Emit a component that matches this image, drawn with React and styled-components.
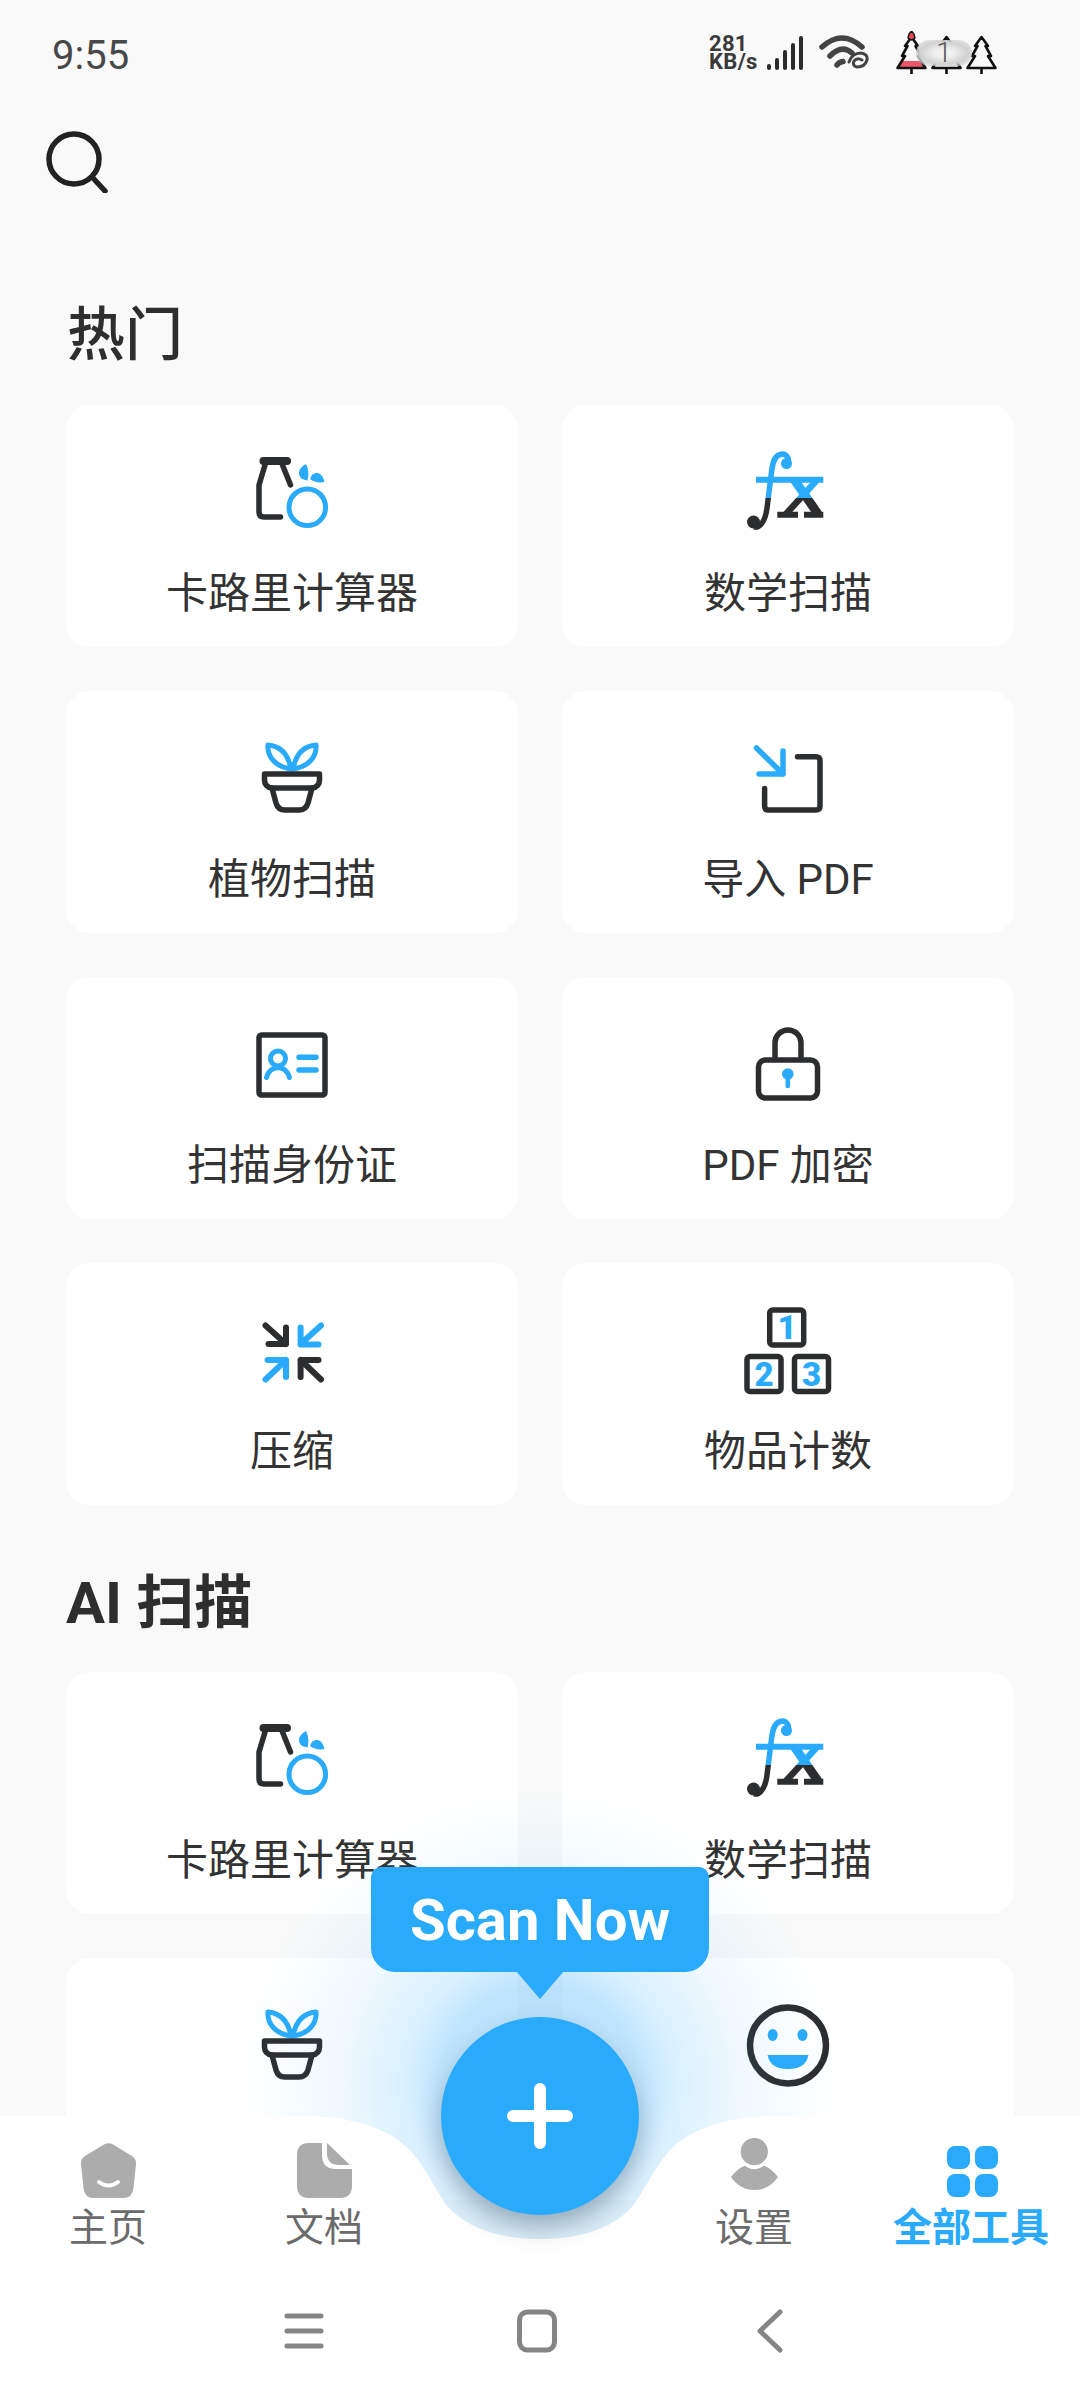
import React from 'react'
import styled, { createGlobalStyle } from 'styled-components'

const BLUE = '#29aafb'
const INK = '#2b2d2f'
const GREY = '#acacac'

const GlobalStyle = createGlobalStyle`
  html, body {
    margin: 0;
    padding: 0;
    background: #f9f9f9;
  }
  * {
    box-sizing: border-box;
  }
`

const Screen = styled.div`
  position: relative;
  width: 1080px;
  height: 2400px;
  overflow: hidden;
  background: #f9f9f9;
  color: #333;
  font-family: Roboto, "Noto Sans CJK SC", sans-serif;
`

const StatusBar = styled.div`
  display: flex;
  justify-content: space-between;
  align-items: center;
  height: 110px;
  padding: 0 83px 0 52px;
`

const Clock = styled.span`
  font-size: 40px;
  color: #484848;
`

const StatusIcons = styled.div`
  position: relative;
  display: flex;
  align-items: center;
  margin-top: -5px;
`

const Speed = styled.div`
  width: 58px;
  font-size: 22px;
  font-weight: 700;
  line-height: 18px;
  letter-spacing: 0.3px;
  color: #3a3a3a;
`

const Signal = styled.div`
  display: flex;
  align-items: flex-end;
  gap: 4px;
  height: 34px;
  margin-right: 16px;
`

const SignalBar = styled.i`
  display: block;
  width: 4px;
  height: ${p => p.$h}px;
  border-radius: 2px;
  background: #2b2b2b;
`

const Trees = styled.div`
  position: relative;
  display: flex;
  gap: 4px;
  margin-left: 27px;
`

const CountPill = styled.span`
  position: absolute;
  top: 9px;
  left: 20px;
  width: 56px;
  height: 26px;
  display: flex;
  align-items: center;
  justify-content: center;
  border-radius: 13px;
  font-size: 28px;
  font-weight: 300;
  color: #555;
  background: radial-gradient(ellipse at center, #f2f2f2 20%, #d2d2d2 60%, rgba(225, 225, 225, 0.2) 100%);
`

const SearchRow = styled.div`
  margin-top: 21px;
  padding-left: 46px;
  height: 62px;
`

const SectionTitle = styled.h2`
  margin: ${p => p.$top}px 0 ${p => p.$bottom}px;
  padding-left: ${p => p.$left}px;
  height: 80px;
  font-size: 58px;
  font-weight: ${p => (p.$bold ? 700 : 500)};
  line-height: 80px;
  color: #2e2e2e;
`

const ToolGrid = styled.div`
  display: grid;
  grid-template-columns: 452px 452px;
  grid-auto-rows: 242px;
  gap: 44px;
  padding: 0 66px;
`

const ToolCard = styled.div`
  display: flex;
  flex-direction: column;
  align-items: center;
  padding-top: 47px;
  border-radius: 24px;
  background: #fff;
`

const ToolLabel = styled.span`
  margin-top: 34px;
  font-size: 42px;
  line-height: 56px;
  color: #333;
`

const Glyph = styled.svg`
  display: block;
  flex: none;
  width: 80px;
  height: 80px;
  overflow: visible;
  fill: none;
  stroke-linecap: round;
  stroke-linejoin: round;
`

const Glow = styled.div`
  position: absolute;
  left: 240px;
  top: 1785px;
  width: 600px;
  height: 600px;
  border-radius: 50%;
  background: radial-gradient(circle closest-side, rgba(41, 170, 251, 0.3) 33%, rgba(41, 170, 251, 0.17) 46%, rgba(41, 170, 251, 0.08) 66%, rgba(41, 170, 251, 0.025) 88%, rgba(41, 170, 251, 0) 100%);
`

const Dock = styled.div`
  position: absolute;
  left: 0;
  right: 0;
  top: 2116px;
  height: 284px;
`

const DockShape = styled.svg`
  position: absolute;
  left: 0;
  top: 0;
  width: 1080px;
  height: 284px;
`

const Tabs = styled.div`
  position: relative;
  display: grid;
  grid-template-columns: 216px 216px 214px 216px 218px;
  padding-top: 22px;
`

const Tab = styled.div`
  display: flex;
  flex-direction: column;
  align-items: center;
  color: ${p => (p.$active ? BLUE : '#6b6b6b')};
`

const TabIcon = styled.svg`
  display: block;
  width: 62px;
  height: 62px;
`

const TabLabel = styled.span`
  font-size: 39px;
  font-weight: ${p => (p.$active ? 700 : 400)};
  line-height: 56px;
  white-space: nowrap;
`

const SystemNav = styled.div`
  position: relative;
  display: flex;
  justify-content: center;
  align-items: center;
  gap: 193px;
  height: 44px;
  margin-top: 53px;
  padding-right: 7px;
`

const SystemIcon = styled.svg`
  display: block;
  width: 40px;
  height: 44px;
  fill: none;
  stroke: #858585;
  stroke-width: 5;
  stroke-linecap: round;
  stroke-linejoin: round;
`

const ScanBubble = styled.div`
  position: absolute;
  left: 371px;
  top: 1867px;
  width: 338px;
  height: 105px;
  display: flex;
  align-items: center;
  justify-content: center;
  border-radius: 10px 10px 24px 24px;
  background: ${BLUE};
  color: #fff;
  font-size: 58px;
  font-weight: 700;

  &::after {
    content: "";
    position: absolute;
    left: 145px;
    top: 104px;
    width: 48px;
    height: 28px;
    background: ${BLUE};
    clip-path: polygon(0 0, 100% 0, 50% 100%);
  }
`

const ScanButton = styled.div`
  position: absolute;
  left: 441px;
  top: 2017px;
  width: 198px;
  height: 198px;
  display: flex;
  align-items: center;
  justify-content: center;
  border-radius: 50%;
  background: ${BLUE};
  box-shadow: 0 12px 24px rgba(50, 65, 80, 0.36);
`

const PlusMark = styled.svg`
  display: block;
  width: 66px;
  height: 66px;
`

const BottleIcon = () => (
  <Glyph viewBox="0 0 80 80">
    <path d="M13 13 L7 33 V60 Q7 65 12 65 H28.5 M30.5 13 L38.5 33" stroke={INK} strokeWidth="5.5" />
    <path d="M11.5 9 H35" stroke={INK} strokeWidth="8" />
    <circle cx="55.3" cy="55.3" r="18.3" stroke={BLUE} strokeWidth="5" />
    <path d="M55.5 28.5 Q46 27 47 20 Q48 15 54 12 Q58 20 55.5 28.5Z" fill={BLUE} />
    <path d="M58 27 Q60 20 66 21 Q71 23 72.5 30 Q64 31.5 58 27Z" fill={BLUE} />
  </Glyph>
)

const FxIcon = () => (
  <Glyph viewBox="0 0 80 80">
    <defs>
      <linearGradient id="fxSplit" gradientUnits="userSpaceOnUse" x1="0" y1="0" x2="0" y2="80">
        <stop offset="0.575" stopColor={BLUE} />
        <stop offset="0.575" stopColor={INK} />
      </linearGradient>
    </defs>
    <g stroke="url(#fxSplit)" strokeLinecap="butt">
      <path d="M38 13 C44 6 37 1 32 2.5 C26 4 24.5 12 23.5 20 L19 56 C17.5 69 12 76 6 75" strokeWidth="5.5" />
      <path d="M8 27.8 H75.3" strokeWidth="6" />
      <path d="M46.5 28 L70 62" strokeWidth="9" />
      <path d="M69 28 L38 62" strokeWidth="6.5" />
      <path d="M29.3 62.7 H50 M56 62.7 H75.3" strokeWidth="6" />
    </g>
    <circle cx="38.5" cy="11.5" r="5.5" fill={BLUE} />
    <circle cx="5.5" cy="70" r="6.5" fill={INK} />
  </Glyph>
)

const PlantIcon = () => (
  <Glyph viewBox="0 0 80 80">
    <path d="M16 7 C27 8 36 15 39 31 C24 29 15 19 16 7Z M64 7 C53 8 44 15 41 31 C56 29 65 19 64 7Z" stroke={BLUE} strokeWidth="5" />
    <path d="M12.5 36 H67.5 V42 Q67.5 49 60 50 H20 Q12.5 49 12.5 42Z" stroke={INK} strokeWidth="5.5" />
    <path d="M20 50 L24 65 Q26 72 33 72 H47 Q54 72 56 65 L60 50" stroke={INK} strokeWidth="5.5" />
  </Glyph>
)

const ImportIcon = () => (
  <Glyph viewBox="0 0 80 80">
    <path d="M49.5 18.7 H68 Q72 18.7 72 22.7 V68 Q72 72 68 72 H20.5 Q16.6 72 16.6 68 V50.5" stroke={INK} strokeWidth="5.5" />
    <path d="M8.5 10 L35 36 M35 13 V36 H11" stroke={BLUE} strokeWidth="5.5" />
  </Glyph>
)

const IdCardIcon = () => (
  <Glyph viewBox="0 0 80 80">
    <rect x="7" y="11" width="66" height="60" rx="2.5" stroke={INK} strokeWidth="5.5" />
    <circle cx="26" cy="34.5" r="7.5" stroke={BLUE} strokeWidth="5" />
    <path d="M14.5 53.5 Q17 44 26 43.5 Q35 44 37.5 53.5" stroke={BLUE} strokeWidth="5" />
    <path d="M47 33.3 H64 M47 46 H64" stroke={BLUE} strokeWidth="5.5" />
  </Glyph>
)

const LockIcon = () => (
  <Glyph viewBox="0 0 80 80">
    <path d="M27 35 V19 A13 13 0 0 1 53 19 V35" stroke={INK} strokeWidth="5.5" />
    <rect x="10.5" y="36" width="59" height="38" rx="7" stroke={INK} strokeWidth="5.5" />
    <circle cx="39.8" cy="50" r="5.8" fill={BLUE} />
    <path d="M39.8 52 V62" stroke={BLUE} strokeWidth="4.6" />
  </Glyph>
)

const CompressIcon = () => (
  <Glyph viewBox="0 0 80 80">
    <path d="M13.5 15.5 L34 34 M34 17.5 V34 H16.5" stroke={INK} strokeWidth="6" />
    <path d="M69 15.5 L48.6 34 M48.6 17.5 V34.5 H66.5" stroke={BLUE} strokeWidth="6" />
    <path d="M13.5 69.5 L34 50 M15.5 50 H34 V67" stroke={BLUE} strokeWidth="6" />
    <path d="M69 69.5 L48.6 50 M66.5 50 H48.6 V67" stroke={INK} strokeWidth="6" />
  </Glyph>
)

const BlockText = styled.text`
  font-family: Roboto, sans-serif;
  font-size: 33px;
  font-weight: 900;
  text-anchor: middle;
  fill: ${BLUE};
`

const BlocksIcon = () => (
  <Glyph viewBox="0 0 80 80">
    <g stroke={INK} strokeWidth="5.5">
      <rect x="21.7" y="0" width="34" height="35" rx="3" />
      <rect x="-1" y="46.5" width="34" height="35" rx="3" />
      <rect x="46.5" y="46.5" width="34" height="35" rx="3" />
    </g>
    <BlockText x="39" y="29">1</BlockText>
    <BlockText x="16" y="76">2</BlockText>
    <BlockText x="63.5" y="76">3</BlockText>
  </Glyph>
)

const SmileIcon = () => (
  <Glyph viewBox="0 0 80 80">
    <circle cx="40" cy="40.5" r="38" stroke={INK} strokeWidth="6.5" />
    <ellipse cx="24.7" cy="30" rx="5" ry="6" fill={BLUE} />
    <ellipse cx="54.5" cy="30" rx="5" ry="6" fill={BLUE} />
    <path d="M19.5 50 H60.5 Q58 64 40 64 Q22 64 19.5 50Z" fill={BLUE} />
  </Glyph>
)

const Tree = ({ red }) => (
  <svg width="31" height="44" viewBox="0 0 31 44" fill="none">
    {red && <path d="M5 30 H26 L29.5 37 H1.5Z" fill="#f0566a" />}
    <path d="M15.5 6 L22 15 H19.5 L25 25 H22 L29.5 37 H1.5 L9 25 H6 L11.5 15 H9Z" stroke="#111" strokeWidth="2.6" strokeLinejoin="round" />
    <path d="M15.5 37 V43" stroke="#111" strokeWidth="2.6" />
    {red && <path d="M15.5 0 L18 3 L19 7 L15.5 9 L12 7 L13 3Z" fill="#e8485c" stroke="#111" strokeWidth="1.4" />}
  </svg>
)

const WifiIcon = () => (
  <svg width="50" height="35" viewBox="0 0 50 35" fill="none" stroke="#444" strokeLinecap="round">
    <path d="M3 12 Q23 -6 43 12" strokeWidth="5.5" />
    <path d="M11 21 Q23 9 33 18" strokeWidth="5.5" />
    <path d="M18 30 Q20 27 24 26.5" strokeWidth="5.5" />
    <path d="M30 27 Q33 18 42 18 Q49 19 48 25 Q46 32 38 32 Q33 31 35 26 Q38 22 43 25" strokeWidth="3" />
  </svg>
)

const SearchIcon = () => (
  <svg width="62" height="62" viewBox="0 0 62 62" fill="none" stroke="#222" strokeWidth="5.5" strokeLinecap="round">
    <circle cx="28" cy="28" r="25" />
    <path d="M47 47 L59 60" />
  </svg>
)

const HomeTab = () => (
  <TabIcon viewBox="0 0 62 62">
    <path d="M27 6.5 Q31.5 4 36 6.5 L55 18 Q59.5 21 59 26 L56.5 50 Q55.5 60 46 60 H17 Q7.5 60 6.5 50 L4 26 Q3.5 21 8 18Z" fill={GREY} />
    <path d="M22 44 Q31.5 51 41 44" fill="none" stroke="#fff" strokeWidth="4" strokeLinecap="round" />
  </TabIcon>
)

const DocTab = () => (
  <TabIcon viewBox="0 0 62 62">
    <path d="M16 5 H29 V17 Q29 31 43 31 H59 V48 Q59 60 47 60 H16 Q4 60 4 48 V17 Q4 5 16 5Z" fill={GREY} />
    <path d="M34 5 L57 27 H46 Q34 27 34 15Z" fill={GREY} />
  </TabIcon>
)

const PersonTab = () => (
  <TabIcon viewBox="0 0 62 62">
    <circle cx="31.3" cy="13.7" r="13.6" fill={GREY} />
    <path d="M8 39 Q14 31 22 27.5 Q31 35 41 27.5 Q49 31 55 39 Q46 52 31.5 52 Q17 52 8 39Z" fill={GREY} />
  </TabIcon>
)

const GridTab = () => (
  <TabIcon viewBox="0 0 62 62" fill={BLUE}>
    <rect x="7" y="8" width="23" height="23" rx="8" />
    <rect x="35" y="8" width="23" height="23" rx="8" />
    <rect x="7" y="36" width="23" height="23" rx="8" />
    <rect x="35" y="36" width="23" height="23" rx="8" />
  </TabIcon>
)

const hotTools = [
  { name: '卡路里计算器', Icon: BottleIcon },
  { name: '数学扫描', Icon: FxIcon },
  { name: '植物扫描', Icon: PlantIcon },
  { name: '导入 PDF', Icon: ImportIcon },
  { name: '扫描身份证', Icon: IdCardIcon },
  { name: 'PDF 加密', Icon: LockIcon },
  { name: '压缩', Icon: CompressIcon },
  { name: '物品计数', Icon: BlocksIcon },
]

// the last row sits under the dock, its labels are hidden there
const aiTools = [
  { name: '卡路里计算器', Icon: BottleIcon },
  { name: '数学扫描', Icon: FxIcon },
  { name: '', Icon: PlantIcon },
  { name: '', Icon: SmileIcon },
]

const tabs = [
  { name: '主页', Icon: HomeTab },
  { name: '文档', Icon: DocTab },
  null,
  { name: '设置', Icon: PersonTab },
  { name: '全部工具', Icon: GridTab, active: true },
]

const signalBars = [6, 12, 20, 27, 34]

const ToolList = ({ tools }) => (
  <ToolGrid>
    {tools.map(({ name, Icon }, i) => (
      <ToolCard key={i}>
        <Icon />
        <ToolLabel>{name}</ToolLabel>
      </ToolCard>
    ))}
  </ToolGrid>
)

const App = () => {
  return (
    <Screen>
      <GlobalStyle />
      <StatusBar>
        <Clock>9:55</Clock>
        <StatusIcons>
          <Speed>281<br />KB/s</Speed>
          <Signal>
            {signalBars.map(h => <SignalBar key={h} $h={h} />)}
          </Signal>
          <WifiIcon />
          <Trees>
            <Tree red />
            <Tree />
            <Tree />
            <CountPill>1</CountPill>
          </Trees>
        </StatusIcons>
      </StatusBar>
      <SearchRow>
        <SearchIcon />
      </SearchRow>
      <SectionTitle $top={102} $bottom={30} $left={67}>热门</SectionTitle>
      <ToolList tools={hotTools} />
      <SectionTitle $top={58} $bottom={29} $left={66} $bold>AI 扫描</SectionTitle>
      <ToolList tools={aiTools} />
      <Glow />
      <Dock>
        <DockShape viewBox="0 0 1080 284">
          <path
            d="M0 0 H310 C360 2 395 15 415 40 C432 62 440 84 452 95 C475 117 510 123 540 123 C570 123 605 117 628 95 C640 84 648 62 665 40 C685 15 720 2 770 0 H1080 V284 H0Z"
            fill="#fff"
          />
        </DockShape>
        <Tabs>
          {tabs.map((tab, i) => tab ? (
            <Tab key={tab.name} $active={tab.active}>
              <tab.Icon />
              <TabLabel $active={tab.active}>{tab.name}</TabLabel>
            </Tab>
          ) : <div key={i} />)}
        </Tabs>
        <SystemNav>
          <SystemIcon viewBox="0 0 40 44">
            <path d="M3 7 H37 M3 22 H37 M3 37 H37" />
          </SystemIcon>
          <SystemIcon viewBox="0 0 40 44">
            <rect x="2.5" y="3" width="35" height="38" rx="8" />
          </SystemIcon>
          <SystemIcon viewBox="0 0 40 44">
            <path d="M30 3 L10 22 L30 41" />
          </SystemIcon>
        </SystemNav>
      </Dock>
      <ScanBubble>Scan Now</ScanBubble>
      <ScanButton>
        <PlusMark viewBox="0 0 66 66">
          <path d="M33 6 V60 M6 33 H60" stroke="#fff" strokeWidth="12" strokeLinecap="round" />
        </PlusMark>
      </ScanButton>
    </Screen>
  )
}

export default App
